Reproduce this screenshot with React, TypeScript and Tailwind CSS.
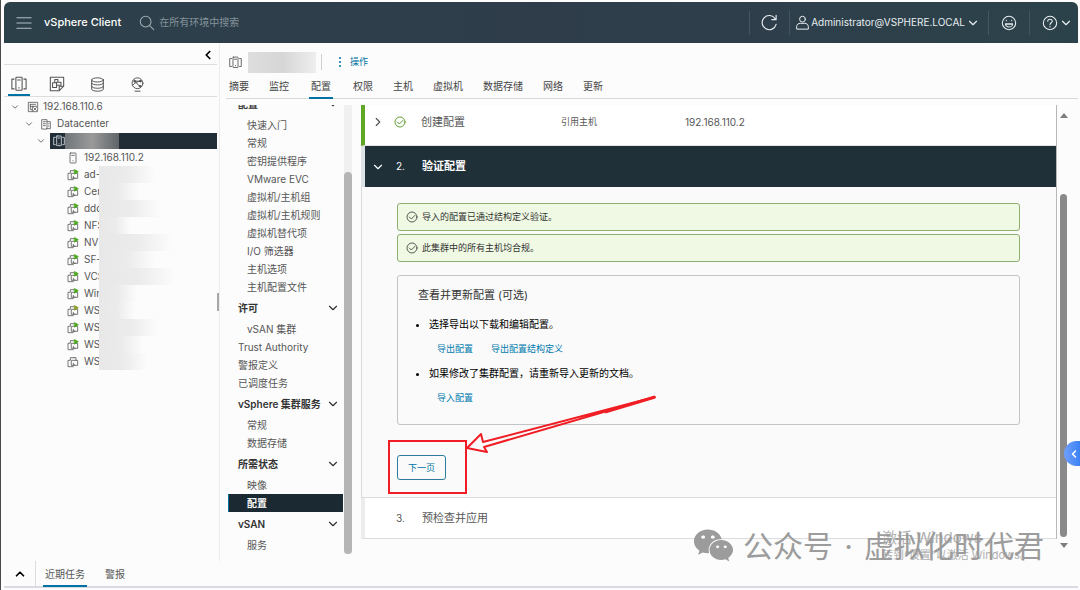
import type { ReactNode } from "react";
import { ChevronDown, ChevronLeft, ChevronRight, ChevronUp } from "lucide-react";
import { FaWeixin } from "react-icons/fa";

type IconProps = { className?: string };

function Svg({ className = "size-4", children }: { className?: string; children: ReactNode }) {
  return (
    <svg
      viewBox="0 0 36 36"
      fill="none"
      stroke="currentColor"
      strokeWidth="2.4"
      strokeLinecap="round"
      strokeLinejoin="round"
      className={`shrink-0 ${className}`}
      aria-hidden="true"
    >
      {children}
    </svg>
  );
}

const ClusterIcon = ({ className }: IconProps) => (
  <Svg className={className}>
    <rect x="11" y="3" width="14" height="29" rx="1" />
    <path d="M7 7H2v22h5M29 7h5v22h-5M15 9h6M18 26v1" />
  </Svg>
);

const VmsIcon = ({ className }: IconProps) => (
  <Svg className={className}>
    <path d="M33 23V3H3v30h20l10-10zM23 33V23h10" />
    <path d="M8 15h9v11H8zM13 15V8h7v6M17 14h10v7H17z" />
  </Svg>
);

const StorageIcon = ({ className }: IconProps) => (
  <Svg className={className}>
    <ellipse cx="18" cy="7" rx="14" ry="5" />
    <path d="M4 7v22c0 3 6 5 14 5s14-2 14-5V7M4 14c0 3 6 5 14 5s14-2 14-5M4 22c0 3 6 5 14 5s14-2 14-5" />
  </Svg>
);

const NetworkIcon = ({ className }: IconProps) => (
  <Svg className={className}>
    <circle cx="18" cy="15" r="13" />
    <path d="M11 10h14M11 10l13 13M6 20c5-6 12-10 20-10M12 34h12" />
    <circle cx="11" cy="10" r="2" fill="currentColor" />
    <circle cx="25" cy="10" r="2" fill="currentColor" />
    <circle cx="24" cy="22" r="2" fill="currentColor" />
  </Svg>
);

const VcenterIcon = ({ className }: IconProps) => (
  <Svg className={className}>
    <path d="M32 15V4H4v28h12M10 10h16M10 16h6M10 10v16h5" />
    <rect x="16" y="16" width="16" height="16" rx="2" />
    <path d="M20 20l8 8M28 20l-8 8" />
  </Svg>
);

const DatacenterIcon = ({ className }: IconProps) => (
  <Svg className={className}>
    <path d="M5 32V5h16v27zM21 11h10v21H21M10 11h6M10 17h6M10 23h6M26 17v1M26 24v1" />
  </Svg>
);

const HostIcon = ({ className }: IconProps) => (
  <Svg className={className}>
    <rect x="9" y="3" width="18" height="30" rx="2" />
    <path d="M14 10h8M18 26v1" />
  </Svg>
);

function VmIcon({ power }: { power: string }) {
  return (
    <Svg className="size-3">
      <path d="M10 12V5h12M8 13H3v19h16M14 13h18v15H14zM19 22v5h5" />
      {power === "on" && <path d="M23 2l11 6-11 7z" fill="#48a818" stroke="#48a818" />}
      {power === "warn" && <path d="M23 2l11 6-11 7z" fill="#8a9a20" stroke="#8a9a20" />}
      {power === "off" && <path d="M22 5h5v8" />}
    </Svg>
  );
}

const CheckIcon = ({ className }: IconProps) => (
  <Svg className={className}>
    <circle cx="18" cy="18" r="15" />
    <path d="M10 18l6 6 11-11" />
  </Svg>
);

const vms = [
  { name: "ad-", power: "on", width: 56 },
  { name: "Cer", power: "on", width: 40 },
  { name: "ddc", power: "on", width: 62 },
  { name: "NFS", power: "on", width: 32 },
  { name: "NV", power: "on", width: 74 },
  { name: "SF-", power: "on", width: 56 },
  { name: "VCS", power: "on", width: 76 },
  { name: "Win", power: "on", width: 38 },
  { name: "WS", power: "warn", width: 36 },
  { name: "WS", power: "on", width: 60 },
  { name: "WS", power: "on", width: 44 },
  { name: "WS", power: "off", width: 48 },
];

const tabs = ["摘要", "监控", "配置", "权限", "主机", "虚拟机", "数据存储", "网络", "更新"];

const menu = [
  { label: "配置", kind: "group" },
  { label: "快速入门", kind: "sub" },
  { label: "常规", kind: "sub" },
  { label: "密钥提供程序", kind: "sub" },
  { label: "VMware EVC", kind: "sub" },
  { label: "虚拟机/主机组", kind: "sub" },
  { label: "虚拟机/主机规则", kind: "sub" },
  { label: "虚拟机替代项", kind: "sub" },
  { label: "I/O 筛选器", kind: "sub" },
  { label: "主机选项", kind: "sub" },
  { label: "主机配置文件", kind: "sub" },
  { label: "许可", kind: "group" },
  { label: "vSAN 集群", kind: "sub" },
  { label: "Trust Authority", kind: "item" },
  { label: "警报定义", kind: "item" },
  { label: "已调度任务", kind: "item" },
  { label: "vSphere 集群服务", kind: "group" },
  { label: "常规", kind: "sub" },
  { label: "数据存储", kind: "sub" },
  { label: "所需状态", kind: "group" },
  { label: "映像", kind: "sub" },
  { label: "配置", kind: "active" },
  { label: "vSAN", kind: "group" },
  { label: "服务", kind: "sub" },
];

function Header() {
  return (
    <header className="flex h-[41px] items-center rounded-t-md bg-linear-to-r from-[#2c404a] via-[#2f3d4b] to-[#2c424a] text-[#e8edf0]">
      <button aria-label="菜单" className="ml-3 text-[#b4bfc5]">
        <Svg className="size-4">
          <path d="M2 6h32M2 18h32M2 30h32" />
        </Svg>
      </button>
      <h1 className="ml-3 text-[11px] font-medium text-white">vSphere Client</h1>
      <label className="ml-[18px] flex flex-1 items-center gap-1 text-[#9fabb2]">
        <Svg className="size-4">
          <circle cx="15" cy="15" r="12" />
          <path d="M24 24l9 9" />
        </Svg>
        <input
          aria-label="搜索"
          placeholder="在所有环境中搜索"
          className="w-40 bg-transparent text-[10px] outline-none placeholder:text-[#84929a]"
        />
      </label>
      <div className="flex h-6 items-center">
        <button aria-label="刷新" className="flex h-6 w-10 items-center justify-center border-l border-[#46555f]">
          <Svg className="size-[17px]">
            <path d="M32 22A15 15 0 1 1 30 10M32 3v9h-9" />
          </Svg>
        </button>
        <button className="flex h-6 items-center gap-px border-l border-[#46555f] pr-2 pl-[5px] text-[10px]">
          <Svg className="size-[15px]">
            <circle cx="18" cy="10" r="7" />
            <path d="M4 33v-5c0-5 4-8 9-8h10c5 0 9 3 9 8v5z" />
          </Svg>
          Administrator@VSPHERE.LOCAL
          <ChevronDown className="size-[14px]" />
        </button>
        <button aria-label="反馈" className="flex h-6 w-[41px] items-center justify-center border-l border-[#46555f]">
          <Svg className="size-4">
            <circle cx="18" cy="18" r="15" />
            <path d="M12 12v1M24 12v1" />
            <path d="M10 20h16c0 4-4 7-8 7s-8-3-8-7zM11 21h14" />
          </Svg>
        </button>
        <button aria-label="帮助" className="flex h-6 items-center gap-px border-l border-[#46555f] pr-[5px] pl-3">
          <Svg className="size-4">
            <circle cx="18" cy="18" r="15" />
            <path d="M13 14c0-6 10-6 10 0 0 4-5 3-5 8M18 26v1" />
          </Svg>
          <ChevronDown className="size-[14px]" />
        </button>
      </div>
    </header>
  );
}

function Sidebar() {
  return (
    <aside className="flex w-[216px] shrink-0 border-r border-[#ececec]">
      <div className="flex flex-1 flex-col">
        <div className="flex h-[22px] items-center justify-end border-b border-[#dcdcdc] pt-[2px] pr-[2px]">
          <button aria-label="收起">
            <ChevronLeft className="size-[14px] text-black" strokeWidth={3} />
          </button>
        </div>
        <div className="flex h-8 items-end gap-[19px] border-b border-[#dcdcdc] pl-1 text-[#565656]">
          <button aria-label="主机和集群" className="border-b-2 border-[#0072a3] px-[3px] pb-[2px]">
            <ClusterIcon />
          </button>
          <button aria-label="虚拟机和模板" className="pb-1">
            <VmsIcon />
          </button>
          <button aria-label="存储" className="px-[6px] pb-1">
            <StorageIcon className="size-[15px]" />
          </button>
          <button aria-label="网络" className="pb-1">
            <NetworkIcon className="size-[15px]" />
          </button>
        </div>
        <ul className="pt-px text-[10px] leading-[17px] text-[#565656]">
          <li className="flex h-[17px] items-center pl-[6px]">
            <ChevronDown className="mr-[7px] size-[10px]" />
            <VcenterIcon className="mr-1 size-3" />
            192.168.110.6
          </li>
          <li className="flex h-[17px] items-center pl-5">
            <ChevronDown className="mr-[6px] size-[10px]" />
            <DatacenterIcon className="mr-[5px] size-3" />
            Datacenter
          </li>
          <li className="flex h-[17px] items-center pl-8">
            <ChevronDown className="mr-1 size-[10px]" />
            <span className="flex h-4 flex-1 items-center bg-[#212e38] pl-[3px] text-[#dfe5e8]">
              <ClusterIcon className="size-3" />
              <span className="h-4 w-[54px] bg-linear-to-r from-[#70767a] via-[#9a9a9a] to-[#5f6569]" />
            </span>
          </li>
          <li className="flex h-[17px] items-center gap-[5px] pl-[63px]">
            <HostIcon className="size-3" />
            192.168.110.2
          </li>
          {vms.map((vm, i) => (
            <li key={i} className="flex h-[17px] items-center pl-[63px]">
              <VmIcon power={vm.power} />
              <span className="ml-[5px] w-[15px] overflow-hidden">{vm.name}</span>
              <span
                className="h-[17px] bg-linear-to-r from-[#e8e8e8] via-[#ebebeb] to-[#fcfcfc]"
                style={{ width: vm.width }}
              />
            </li>
          ))}
        </ul>
      </div>
      <div className="flex w-[2px] items-center">
        <div className="h-[18px] w-[2px] bg-[#a8a8a8]" />
      </div>
    </aside>
  );
}

function ConfigMenu() {
  return (
    <div className="flex w-[125px] shrink-0 overflow-hidden">
      <nav className="-mt-[13px] flex-1 text-[10px] text-[#565656]">
        {menu.map((m, i) => {
          if (m.kind === "group") {
            return (
              <button key={i} className="flex h-6 w-full items-center justify-between pr-[3px] pl-[10px] font-semibold text-[#333]">
                {m.label}
                <ChevronDown className="size-[14px]" />
              </button>
            );
          }
          if (m.kind === "active") {
            return (
              <a key={i} href="#" className="flex h-[18px] items-center border-l border-[#0072a3] bg-[#1b2a32] pl-[18px] font-semibold text-white">
                {m.label}
              </a>
            );
          }
          return (
            <a key={i} href="#" className={`flex h-[18px] items-center ${m.kind === "sub" ? "pl-[19px]" : "pl-[10px]"}`}>
              {m.label}
            </a>
          );
        })}
      </nav>
      <div className="mx-px flex w-2 flex-col bg-[#f0f0f0] pt-[67px]">
        <div className="flex-1 rounded-full bg-[#b5b5b5]" />
      </div>
    </div>
  );
}

function Alert({ children }: { children: ReactNode }) {
  return (
    <p className="flex h-7 items-center gap-1 rounded-[3px] border border-[#8fae74] bg-[#eff9e3] pl-2 text-[9px] text-[#333]">
      <CheckIcon className="size-3" />
      {children}
    </p>
  );
}

function Steps() {
  return (
    <section className="min-w-0 flex-1 border-r border-[#b8b8b8]">
      <div className="flex h-[41px] items-center border-b border-l-4 border-b-[#e4e4e4] border-l-[#60a726] bg-white pb-[6px] pl-[6px] text-[#565656]">
        <ChevronRight className="size-[14px]" />
        <CheckIcon className="ml-[9px] size-3 text-[#3c8500]" />
        <h2 className="ml-[15px] w-[140px] text-[11px]">创建配置</h2>
        <span className="w-[124px] text-[9px]">引用主机</span>
        <span className="text-[10px]">192.168.110.2</span>
      </div>
      <div className="flex h-[41px] items-center border-l-4 border-[#dde4e7] bg-[#1f3038] pl-[6px] text-[11px] text-white">
        <ChevronDown className="size-[14px]" />
        <span className="ml-[11px] w-[26px] text-[10px]">2.</span>
        <h2 className="font-semibold">验证配置</h2>
      </div>
      <div className="relative border-b border-l border-[#dcdcdc] bg-[#fafafa] pt-4 pr-9 pb-[17px] pl-[35px]">
        <div className="flex flex-col gap-[3px]">
          <Alert>导入的配置已通过结构定义验证。</Alert>
          <Alert>此集群中的所有主机均合规。</Alert>
        </div>
        <div className="mt-[13px] rounded-[3px] border border-[#c4c4c4] px-5 pt-[10px] pb-4 text-[10px] text-black">
          <h3 className="text-[11px] leading-[18px] text-[#333]">查看并更新配置 (可选)</h3>
          <ul className="mt-[10px] list-disc pl-[11px] leading-5">
            <li>
              选择导出以下载和编辑配置。
              <div className="mb-1 flex h-[25px] items-end gap-[18px] pl-2 text-[9px] text-[#0079ad]">
                <button className="leading-5">导出配置</button>
                <button className="leading-5">导出配置结构定义</button>
              </div>
            </li>
            <li>
              如果修改了集群配置，请重新导入更新的文档。
              <div className="flex h-[25px] items-end pl-2 text-[9px] text-[#0079ad]">
                <button className="leading-5">导入配置</button>
              </div>
            </li>
          </ul>
        </div>
        <button className="mt-[30px] block h-[25px] w-[49px] rounded-[3px] border border-[#2b7d9b] text-[9px] text-[#0072a3]">
          下一页
        </button>
        <div className="absolute bottom-[3px] left-[26px] h-[54px] w-[79px] border-2 border-[#f01e24]" />
        <svg
          viewBox="0 0 192 62"
          fill="none"
          stroke="#f01e24"
          strokeWidth="2"
          strokeLinejoin="round"
          className="pointer-events-none absolute bottom-[40px] left-[103px] h-[62px] w-[192px]"
          aria-hidden="true"
        >
          <path d="M190 2L18 47l-2-8L2 53l20 4-3-5z" />
          <path d="M190 2L140 17" strokeWidth="3" />
        </svg>
      </div>
      <div className="flex h-[41px] items-center border-b border-l-4 border-b-[#dcdcdc] border-l-[#ececec] bg-white pl-[31px] text-[#565656]">
        <span className="w-[26px] text-[10px]">3.</span>
        <h2 className="text-[11px]">预检查并应用</h2>
      </div>
    </section>
  );
}

function Main() {
  return (
    <main className="flex min-w-0 flex-1 flex-col pl-[6px]">
      <div className="flex h-[38px] items-center pl-[3px] text-[#565656]">
        <ClusterIcon className="size-[13px]" />
        <span className="ml-[6px] h-[21px] w-[68px] bg-linear-to-r from-[#dedede] via-[#d6d6d6] to-[#eeeeee]" />
        <span className="ml-[5px] h-4 border-l border-[#d0d0d0]" />
        <button className="ml-4 flex items-center gap-2 text-[9px] text-[#0072a3]">
          <svg viewBox="0 0 4 12" fill="currentColor" className="h-3 w-1" aria-hidden="true">
            <circle cx="2" cy="2" r="1" />
            <circle cx="2" cy="6" r="1" />
            <circle cx="2" cy="10" r="1" />
          </svg>
          操作
        </button>
      </div>
      <nav className="flex h-[18px] gap-5 border-b border-[#d8d8d8] pl-[3px] text-[10px] text-[#454545]">
        {tabs.map((t) => (
          <a key={t} href="#" className={t === "配置" ? "h-[18px] border-b-2 border-[#0072a3] px-[2px] leading-[10px]" : "leading-[10px]"}>
            {t}
          </a>
        ))}
      </nav>
      <div className="flex flex-1 items-start pt-[6px] pl-[2px]">
        <ConfigMenu />
        <div className="flex min-w-0 flex-1 pl-2">
          <Steps />
          <div className="flex w-[13px] flex-col items-center pt-2 text-[#7d7d7d]">
            <svg viewBox="0 0 8 5" fill="currentColor" className="h-[5px] w-2" aria-hidden="true">
              <path d="M4 0l4 5H0z" />
            </svg>
            <div className="mt-[76px] w-[7px] flex-1 rounded-full bg-[#8a8a8a]" />
            <svg viewBox="0 0 8 5" fill="currentColor" className="mt-[6px] -mb-[9px] h-[5px] w-2" aria-hidden="true">
              <path d="M0 0h8L4 5z" />
            </svg>
          </div>
          <div className="w-2" />
        </div>
      </div>
    </main>
  );
}

function Watermark() {
  return (
    <div className="pointer-events-none absolute right-[36px] bottom-[24px] flex items-center text-[#9c9c9c]">
      <div className="absolute top-[4px] left-[189px] whitespace-nowrap text-[#b0b0b0]">
        <p className="text-[15px] leading-[18px]">激活 Windows</p>
        <p className="text-[11px] leading-4">转到“设置”以激活 Windows。</p>
      </div>
      <FaWeixin className="mr-[9px] size-[41px]" />
      <p className="relative flex text-[30px] leading-9 whitespace-nowrap">
        <span>公众号</span>
        <span className="w-[31px] text-center">·</span>
        <span>虚拟化时代君</span>
      </p>
    </div>
  );
}

export default function App() {
  return (
    <div className="relative flex min-h-screen flex-col border-l border-[#4a4a4a] bg-[#fcfcfc] pt-[2px] pr-[2px] pl-[3px] font-['Inter','Noto_Sans_CJK_SC',sans-serif]">
      <Header />
      <div className="flex flex-1">
        <Sidebar />
        <Main />
      </div>
      <footer className="mb-[2px] flex h-[27px] items-center border-b-2 border-[#dadbe2] text-[10px] text-[#565656]">
        <button aria-label="展开" className="flex h-[25px] w-8 items-center justify-center border-r border-[#dcdcdc]">
          <ChevronUp className="size-[14px] text-black" strokeWidth={3} />
        </button>
        <a href="#" className="ml-[7px] flex h-[27px] items-center border-b-2 border-[#0072a3] px-[2px] pt-[3px]">
          近期任务
        </a>
        <a href="#" className="ml-[18px] pt-px">
          警报
        </a>
      </footer>
      <button
        aria-label="展开侧栏"
        className="absolute right-0 bottom-[124px] flex h-[25px] w-4 items-center justify-end rounded-l-full bg-linear-to-r from-[#6f9ffb] to-[#3b82f6] text-white"
      >
        <ChevronLeft className="size-3" strokeWidth={3} />
      </button>
      <Watermark />
    </div>
  );
}
